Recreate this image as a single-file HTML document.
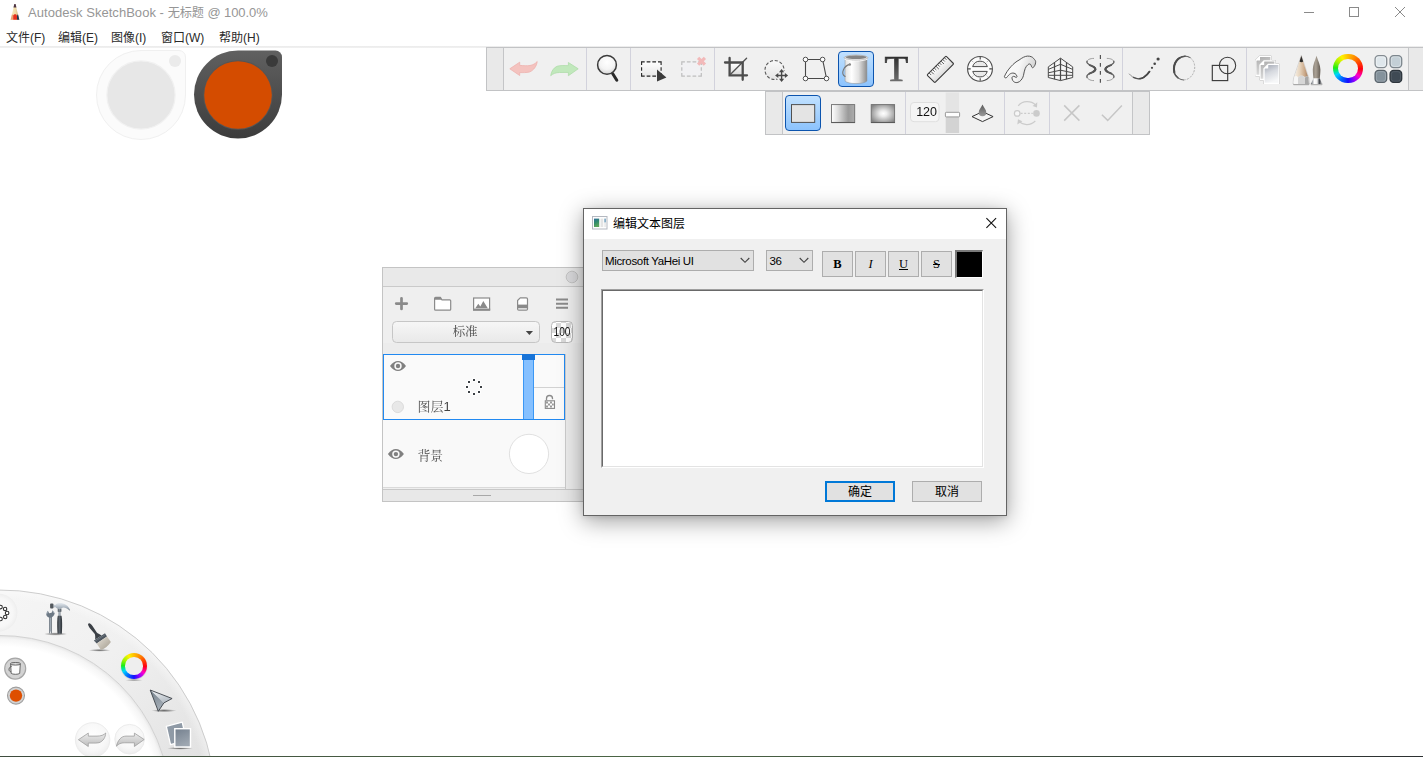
<!DOCTYPE html>
<html lang="zh-CN">
<head>
<meta charset="utf-8">
<title>Autodesk SketchBook</title>
<style>
*{box-sizing:border-box;margin:0;padding:0}
html,body{width:1423px;height:757px;overflow:hidden;background:#fff}
body{position:relative;font-family:"Liberation Sans","Noto Sans CJK SC",sans-serif;font-size:12px;color:#000}
.abs{position:absolute}
svg{position:absolute;overflow:visible}
/* title + menu */
#title{left:28px;top:4px;height:18px;line-height:18px;font-size:13px;color:#969696;white-space:nowrap;letter-spacing:-0.09px}
#menu{left:0;top:29.500px;height:17px;line-height:17px;font-size:12px;color:#2a2a2a;white-space:nowrap}
#menu span{position:absolute;top:0}
#menuline{left:0;top:46px;width:1423px;height:2px;background:linear-gradient(#ebebeb,#f1f1f1)}
#bottomline{left:0;top:756px;width:1423px;height:1px;background:linear-gradient(90deg,#3f4d3f,#4b6545 45%,#3b4a3c 75%,#2c3032);z-index:50}
/* toolbars */
.tb{background:#f0f0f0;border:1px solid #c2c3c5}
.tbh{background:#e9e9e9}
.vdiv{width:1px;background:#d2d2dc}
.sel{border:1.400px solid #0c54ae;border-radius:4px;background:linear-gradient(#c1e1ff,#8cc3fd)}
/* layer panel */
.serif{font-family:"Liberation Serif","Noto Serif CJK SC",serif;opacity:0.999}
/* dialog */
#dlg{left:583px;top:208px;width:424px;height:308px;background:#f0f0f0;border:1px solid #646464;box-shadow:0 5px 22px rgba(0,0,0,.38),0 1px 5px rgba(0,0,0,.10)}
.wbtn{background:#e1e1e1;border:1px solid #adadad}
.sb{font-family:"Liberation Serif",serif;font-size:12.500px;text-align:center;line-height:25px;color:#000}
</style>
</head>
<body>

<!-- ===== window title bar ===== -->
<div class="abs" id="title"><span style="letter-spacing:0.040px">Autodesk SketchBook - </span><span style="font-size:12.200px">无标题</span> @ 100.0%</div>
<div class="abs" id="menu">
<span style="left:6px">文件(F)</span><span style="left:58px">编辑(E)</span><span style="left:111px">图像(I)</span><span style="left:161px">窗口(W)</span><span style="left:219px">帮助(H)</span>
</div>

<!-- app icon (pencil) -->
<svg style="left:4px;top:0px" width="24" height="24" viewBox="4 0 24 24">
<defs><linearGradient id="gPen" x1="0" y1="0" x2="1" y2="0"><stop offset="0" stop-color="#fbedc4"/><stop offset="0.600" stop-color="#efd9a2"/><stop offset="1" stop-color="#c9a878"/></linearGradient></defs>
<path d="M14.400 4.600 H15.500 L19.300 19.700 H10.600 Z" fill="url(#gPen)"/>
<path d="M14.300 4.100 H15.600 L16.450 7.600 H13.450 Z" fill="#4c3444"/>
<path d="M11.900 14.700 C12.400 14.400 13 14.800 13.300 15.600 V19.700 H10.600 Z" fill="#eba274"/>
<path d="M13.200 15.600 C14 13.700 16.200 13.700 17 15.400 V19.700 H13.200 Z" fill="#e8311d"/>
<path d="M17 15.400 C17.300 14.600 17.800 14.300 18.100 14.500 L19.300 19.700 H17 Z" fill="#213a52"/>
</svg>
<!-- window controls -->
<svg style="left:1300px;top:4px" width="110" height="18" viewBox="0 0 110 18">
<path d="M4 8.5 H14" stroke="#8a8a8a" stroke-width="1" fill="none"/>
<rect x="49.5" y="3.5" width="9" height="9" stroke="#8a8a8a" stroke-width="1" fill="none"/>
<path d="M95 3 L105 13 M105 3 L95 13" stroke="#8a8a8a" stroke-width="1" fill="none"/>
</svg>
<div class="abs" id="menuline"></div>
<div class="abs" id="bottomline"></div>

<!-- ===== lagoon ===== -->
<svg id="lag" style="left:0;top:570px" width="240" height="187" viewBox="0 570 240 187">
<defs>
<linearGradient id="lgRing" gradientUnits="userSpaceOnUse" x1="20" y1="590" x2="200" y2="760"><stop offset="0" stop-color="#f5f5f5"/><stop offset="0.450" stop-color="#f0f0f0"/><stop offset="1" stop-color="#e2e2e2"/></linearGradient>
<radialGradient id="lgIn" gradientUnits="userSpaceOnUse" cx="0" cy="806" r="170.500"><stop offset="0.935" stop-color="#ffffff"/><stop offset="0.980" stop-color="#f5f5f5"/><stop offset="1" stop-color="#e6e6e6"/></radialGradient>
<radialGradient id="lgOut" gradientUnits="userSpaceOnUse" cx="0" cy="806" r="216"><stop offset="0.955" stop-color="#ffffff" stop-opacity="0"/><stop offset="1" stop-color="#ffffff" stop-opacity="0.400"/></radialGradient>
<radialGradient id="lgBlob"><stop offset="0" stop-color="#fbfbfb"/><stop offset="0.750" stop-color="#f7f7f7"/><stop offset="0.930" stop-color="#f1f1f1"/><stop offset="1" stop-color="#ededed"/></radialGradient>
<radialGradient id="lgSh"><stop offset="0" stop-color="#000" stop-opacity="0.550"/><stop offset="0.500" stop-color="#000" stop-opacity="0.300"/><stop offset="1" stop-color="#000" stop-opacity="0"/></radialGradient>
<linearGradient id="lgSteel" x1="0" y1="0" x2="1" y2="0"><stop offset="0" stop-color="#59636d"/><stop offset="0.450" stop-color="#a9b3bd"/><stop offset="1" stop-color="#4e5861"/></linearGradient>
<linearGradient id="lgHead" x1="0" y1="0" x2="0" y2="1"><stop offset="0" stop-color="#e6ebf0"/><stop offset="0.550" stop-color="#aeb8c2"/><stop offset="1" stop-color="#6f7a85"/></linearGradient>
<linearGradient id="lgGrip" x1="0" y1="0" x2="1" y2="0"><stop offset="0" stop-color="#2f3439"/><stop offset="0.450" stop-color="#5a626a"/><stop offset="1" stop-color="#2b3035"/></linearGradient>
<linearGradient id="lgBr" x1="0" y1="0" x2="1" y2="1"><stop offset="0" stop-color="#e6e2d9"/><stop offset="1" stop-color="#a39b8d"/></linearGradient>
<linearGradient id="lgArA" x1="0" y1="0" x2="0.600" y2="1"><stop offset="0" stop-color="#f6f8fa"/><stop offset="1" stop-color="#b4bcc4"/></linearGradient>
<linearGradient id="lgArB" x1="0" y1="0" x2="0.300" y2="1"><stop offset="0" stop-color="#74808b"/><stop offset="1" stop-color="#a4adb6"/></linearGradient>
<linearGradient id="lgPg" x1="0" y1="0" x2="0.400" y2="1"><stop offset="0" stop-color="#74808e"/><stop offset="1" stop-color="#9ea7b1"/></linearGradient>
<linearGradient id="lgUR" x1="0" y1="0" x2="0" y2="1"><stop offset="0" stop-color="#ececec"/><stop offset="1" stop-color="#bcbcbc"/></linearGradient>
<radialGradient id="lgBtn" cx="0.500" cy="0.400" r="0.600"><stop offset="0" stop-color="#ffffff"/><stop offset="0.700" stop-color="#f7f7f7"/><stop offset="1" stop-color="#ededed"/></radialGradient>
</defs>
<!-- inner disc shadow -->
<circle cx="0" cy="806" r="170.500" fill="url(#lgIn)"/>
<!-- ring -->
<path d="M0 590 A216 216 0 0 1 216 806 L170.500 806 A170.500 170.500 0 0 0 0 635.500 Z" fill="url(#lgRing)"/>
<path d="M0 590 A216 216 0 0 1 216 806 L170.500 806 A170.500 170.500 0 0 0 0 635.500 Z" fill="url(#lgOut)"/>
<path d="M-2 590.010 A216 216 0 0 1 216 806" fill="none" stroke="#cdcdcd" stroke-width="1"/>
<path d="M-2 635.510 A170.500 170.500 0 0 1 170.500 806" fill="none" stroke="#d2d2d2" stroke-width="1"/>
<!-- left blob -->
<circle cx="-1.500" cy="612.600" r="18.900" fill="url(#lgBlob)"/>
<g fill="#fff" stroke="#303030" stroke-width="1.100"><circle cx="0.500" cy="607.100" r="1.800"/><circle cx="5.100" cy="609" r="1.700"/><circle cx="7.100" cy="613" r="1.800"/><circle cx="5.200" cy="617" r="1.700"/><circle cx="0.500" cy="619" r="1.800"/></g>
<!-- tools -->
<ellipse cx="55.600" cy="634" rx="11.800" ry="1.700" fill="url(#lgSh)"/>
<path d="M49.100 616.800 H51.800 V633.300 H49.100 Z" fill="url(#lgSteel)"/>
<path d="M50.100 631.600 h0.700 v1.700 h-0.700 Z" fill="#f4f4f4"/>
<path d="M47.500 610.800 L46.200 614.300 C46.500 616.500 48 617.700 50.500 617.700 C52.500 617.500 54.200 615.500 54.700 613.200 L52.600 610.300 L51.600 612.700 L49.100 613.300 L48.300 611.400 Z" fill="#6d7985"/>
<path d="M47.600 611.300 L46.700 614.200 M52.700 610.900 L54.100 613.100" stroke="#b4bec8" stroke-width="0.700" fill="none"/>
<path d="M57.800 608.600 H61.300 V611.400 H60.500 V615.900 H58.500 V611.400 H57.800 Z" fill="url(#lgSteel)"/>
<path d="M57.800 610 H61.300 M57.800 611.300 H61.300" stroke="#454c53" stroke-width="0.600"/>
<path d="M57.800 615.800 H61.500 C62.300 619 62.300 628 61.800 633.800 H57.600 C57 628 57 619 57.800 615.800 Z" fill="url(#lgGrip)"/>
<path d="M53.200 604.400 L55.200 605 C56.200 604 57 603.400 57.800 603.200 C59.500 602.800 61.500 602.900 63.100 603.400 C64.800 604 66.300 604.800 67.300 605.800 C68.500 607 69.400 608.400 70 609.800 L69.700 610.800 C68.800 609.800 67.900 609 66.800 608.400 C65.600 607.800 64.300 607.400 63.100 607.400 C62.300 607.500 61.600 607.900 61 608.600 L57.800 608.700 C56.800 608.300 56 607.600 55.200 606.900 L53.200 607.800 Z" fill="url(#lgHead)"/>
<rect x="50.100" y="603.600" width="3.300" height="4.900" rx="0.900" fill="#54595e"/>
<!-- brush -->
<ellipse cx="99.600" cy="650.300" rx="11" ry="1.400" fill="url(#lgSh)"/>
<path d="M88.600 623.400 C89.300 622.900 90 623.200 90.400 623.700 C91.200 624.400 91.900 625.100 92.500 625.900 L95.150 630.100 L96.800 632.600 C97.800 633.700 99.300 634.100 101.600 635.500 L95.200 639.600 C95.300 637.600 95.300 635.600 94.800 634.100 L92.900 631.800 L89.700 628 C89 627.100 88.600 626.200 88.250 625.300 C87.900 624.500 88.100 623.800 88.600 623.400 Z" fill="#3b4046"/>
<path d="M93.900 640.400 L105 633.300 L107 636.400 L96.700 643.600 Z" fill="#4d565f"/>
<path d="M94.900 641.300 L105.700 634.400" stroke="#7d8790" stroke-width="0.600"/>
<path d="M96.700 643.600 L107 636.400 L110.900 642 C108 646 105 648.500 101 649.900 Z" fill="url(#lgBr)"/>
<!-- colour wheel shadow -->
<ellipse cx="134" cy="680.200" rx="9" ry="1.200" fill="url(#lgSh)" opacity="0.600"/>
<!-- arrow -->
<ellipse cx="164" cy="710.600" rx="12.500" ry="1.600" fill="url(#lgSh)"/>
<path d="M150.200 690 L172.100 698.500 L163.900 702.900 Z" fill="url(#lgArA)"/>
<path d="M150.200 690 L163.900 702.900 L158.300 711.300 Z" fill="url(#lgArB)"/>
<path d="M150.200 690 L172.100 698.500 L163.900 702.900 L158.300 711.300 Z" fill="none" stroke="#3c4248" stroke-width="0.900" stroke-linejoin="round"/>
<!-- pages -->
<ellipse cx="180" cy="748.300" rx="13" ry="1.400" fill="url(#lgSh)"/>
<path d="M166.300 726.300 L182.200 722.200 L186.500 740.500 L170.500 744.600 Z" fill="#8f9aa6" stroke="#fff" stroke-width="1.300" stroke-linejoin="round"/>
<rect x="174.800" y="728.700" width="15.700" height="18.300" fill="url(#lgPg)" stroke="#fff" stroke-width="1.400"/>
<!-- mini bucket -->
<circle cx="15.200" cy="668.600" r="10.500" fill="#d3d3d3" stroke="#a6a6a6" stroke-width="1.200"/>
<path d="M10.600 663.800 L11.200 673.400 C12.500 674.600 18.400 674.600 19.700 673.400 L20.300 663.800 Z" fill="#fcfcfc" stroke="#5a5a5a" stroke-width="0.900"/>
<ellipse cx="15.450" cy="663.800" rx="5" ry="1.300" fill="#dcdcdc" stroke="#555" stroke-width="0.900"/>
<path d="M11.800 666.200 C8.600 667 8 671 10.800 671.800" fill="none" stroke="#555" stroke-width="0.900"/>
<!-- colour dot -->
<circle cx="16" cy="695.600" r="8.500" fill="#d2d2d2" stroke="#9e9e9e" stroke-width="1.100"/>
<circle cx="16" cy="695.600" r="6.200" fill="#de4f00"/>
<!-- undo / redo -->
<circle cx="92.600" cy="739.900" r="17.200" fill="url(#lgBtn)" stroke="#ececec" stroke-width="1"/>
<circle cx="129.600" cy="739.200" r="14.800" fill="url(#lgBtn)" stroke="#ececec" stroke-width="1"/>
<path d="M78.400 739.700 L88.300 733.100 L88.300 736.100 L97 736.100 C101 736.100 104 735 105.700 733 C105.500 737 103.500 741.200 99 742.700 C97 743.200 95 743.100 93 743.100 L88.300 743.100 L88.300 746.500 Z" fill="url(#lgUR)" stroke="#999" stroke-width="0.750" stroke-linejoin="round"/>
<path d="M144.200 739.500 L134.400 733.100 L134.400 736.100 L126 736.100 C121 736.100 117.800 740.500 116.400 746.200 C118.500 743.800 121 742.800 124.500 742.800 L134.400 742.800 L134.400 746.500 Z" fill="url(#lgUR)" stroke="#999" stroke-width="0.750" stroke-linejoin="round"/>
</svg>
<div class="abs" style="left:121px;top:653px;width:26px;height:26px;border-radius:50%;background:conic-gradient(from 0deg,#ffbe00 0deg,#ff8c00 30deg,#ff4800 60deg,#ff0010 92deg,#ff00c8 125deg,#9800ff 150deg,#1410ff 180deg,#0068ff 212deg,#00d4ff 242deg,#00e890 257deg,#20ee10 273deg,#a4f400 302deg,#fff200 332deg,#ffbe00 360deg);box-shadow:0 0.500px 1px rgba(0,0,0,0.250)"></div><div class="abs" style="left:125.300px;top:657.300px;width:17.400px;height:17.400px;border-radius:50%;background:#eeeeee"></div>

<!-- ===== colour pucks ===== -->
<svg style="left:0;top:0" width="300" height="150" viewBox="0 0 300 150">
<defs>
<linearGradient id="pkd" x1="0" y1="0" x2="0" y2="1"><stop offset="0" stop-color="#606060"/><stop offset="1" stop-color="#3c3c3c"/></linearGradient>
</defs>
<!-- light puck -->
<path d="M141 50.5 H179 a6.5 6.5 0 0 1 6.500 6.500 V95 A44.5 44.500 0 1 1 141 50.500 Z" fill="#fbfbfb" stroke="#f0f0f0" stroke-width="1"/>
<circle cx="141" cy="95" r="34.100" fill="#e7e7e7" stroke="#f1f1f1" stroke-width="1.200"/>
<circle cx="175" cy="61" r="6" fill="#ebebeb"/>
<!-- dark puck -->
<path d="M238 50.5 H275.500 a6.500 6.500 0 0 1 6.500 6.500 V94.500 A44 44 0 1 1 238 50.500 Z" fill="url(#pkd)"/>
<circle cx="238" cy="95" r="34.800" fill="#555" />
<circle cx="238" cy="95" r="33.800" fill="#d44c00"/>
<circle cx="272" cy="61" r="6" fill="#3a3a3a"/>
</svg>

<!-- ===== main toolbar ===== -->
<div class="abs tb" id="tb1" style="left:486px;top:47px;width:940px;height:44px"></div>
<div class="abs tbh" style="left:487px;top:48px;width:16px;height:42px"></div>
<div class="abs tbh" style="left:1409px;top:48px;width:16px;height:42px"></div>
<div class="abs vdiv" style="left:503px;top:48px;height:42px;background:#c4c5c7"></div>
<div class="abs vdiv" style="left:586px;top:48px;height:42px"></div>
<div class="abs vdiv" style="left:630px;top:48px;height:42px"></div>
<div class="abs vdiv" style="left:714px;top:48px;height:42px"></div>
<div class="abs vdiv" style="left:918px;top:48px;height:42px"></div>
<div class="abs vdiv" style="left:1122px;top:48px;height:42px"></div>
<div class="abs vdiv" style="left:1246px;top:48px;height:42px"></div>
<div class="abs vdiv" style="left:1408px;top:48px;height:42px;background:#c4c5c7"></div>
<div class="abs sel" style="left:838px;top:51px;width:36px;height:36px"></div>
<svg id="tb1i" style="left:0;top:0" width="1423" height="140" viewBox="0 0 1423 140">
<defs>
<linearGradient id="gW" x1="0" y1="0" x2="0" y2="1"><stop offset="0" stop-color="#ffffff"/><stop offset="1" stop-color="#dcdcdc"/></linearGradient>
<linearGradient id="gW3" x1="0" y1="0" x2="0" y2="1"><stop offset="0" stop-color="#ffffff"/><stop offset="1" stop-color="#e7e7e7"/></linearGradient>
<linearGradient id="gT" x1="0" y1="0" x2="0" y2="1"><stop offset="0" stop-color="#2b2b2b"/><stop offset="1" stop-color="#707070"/></linearGradient>
<radialGradient id="gMag" cx="0.5" cy="0.35" r="0.65"><stop offset="0" stop-color="#ffffff"/><stop offset="0.6" stop-color="#f4f4f4"/><stop offset="1" stop-color="#d4d4d4"/></radialGradient>
<linearGradient id="gBk" x1="0" y1="0" x2="1" y2="0"><stop offset="0" stop-color="#e2e2e2"/><stop offset="0.300" stop-color="#ffffff"/><stop offset="0.620" stop-color="#e2e2e2"/><stop offset="0.900" stop-color="#a4a4a4"/><stop offset="1" stop-color="#8a8a8a"/></linearGradient>
<linearGradient id="gPg" x1="0" y1="0" x2="0.350" y2="1"><stop offset="0" stop-color="#9fa4b0"/><stop offset="0.500" stop-color="#d6d9df"/><stop offset="1" stop-color="#f6f7f8"/></linearGradient>
<linearGradient id="gPgB" x1="0" y1="0" x2="0.350" y2="1"><stop offset="0" stop-color="#a8a8a8"/><stop offset="1" stop-color="#e0e0e0"/></linearGradient>
<linearGradient id="gWood" x1="0" y1="0" x2="1" y2="0"><stop offset="0" stop-color="#f7f1e8"/><stop offset="0.400" stop-color="#e6d3bc"/><stop offset="0.750" stop-color="#c9a686"/><stop offset="1" stop-color="#9a7557"/></linearGradient>
<linearGradient id="gBris" x1="0" y1="0" x2="1" y2="0"><stop offset="0" stop-color="#8d857b"/><stop offset="0.4" stop-color="#aaa195"/><stop offset="1" stop-color="#645c53"/></linearGradient>
<linearGradient id="gFer" x1="0" y1="0" x2="1" y2="0"><stop offset="0" stop-color="#5a6068"/><stop offset="0.3" stop-color="#ffffff"/><stop offset="0.55" stop-color="#f0f0f0"/><stop offset="0.75" stop-color="#3c4046"/><stop offset="1" stop-color="#c8c8c8"/></linearGradient>
<linearGradient id="gFc" x1="0" y1="0" x2="1" y2="0.300"><stop offset="0" stop-color="#ffffff"/><stop offset="0.550" stop-color="#f6f6f6"/><stop offset="1" stop-color="#d4d4d4"/></linearGradient>
<clipPath id="cpPro"><circle cx="980" cy="68.8" r="7.300"/></clipPath>
</defs>

<!-- undo / redo -->
<path d="M509.800 68.800 L519.700 62.200 L519.700 65.400 C524 65.600 527 66 530 65.500 C533 65 535.500 63.500 537.200 61.500 C536.800 66 533.500 70.500 529.500 72 C526 72.800 523 72.600 519.700 72.600 L519.700 75.500 Z" fill="#f4c3bf" stroke="#eeb1ad" stroke-width="0.800" stroke-linejoin="round"/>
<path d="M578.200 68.800 L568.400 62.500 L568.400 65.700 C564 65.500 560 65.300 557 66.300 C553.500 67.800 551.300 71.500 550.700 75.700 C553 73.500 556 72.600 559.500 72.500 C562.500 72.400 565.500 72.400 568.400 72.400 L568.400 75.700 Z" fill="#c1e8bc" stroke="#aedcaa" stroke-width="0.800" stroke-linejoin="round"/>

<!-- magnifier -->
<path d="M612.600 73.500 L616.800 80.200" stroke="#2a2a2a" stroke-width="3" stroke-linecap="round"/>
<circle cx="607" cy="64.900" r="9.400" fill="url(#gMag)" stroke="#3a3a3a" stroke-width="1.500"/>

<!-- select -->
<rect x="641.600" y="61.900" width="19.500" height="14.200" fill="url(#gW3)"/><path d="M641.00 61.90 h3.7 M641.00 76.10 h3.7 M646.67 61.90 h3.7 M646.67 76.10 h3.7 M652.33 61.90 h3.7 M652.33 76.10 h3.7 M658.00 61.90 h3.7 M658.00 76.10 h3.7 M641.60 61.30 v3.7 M661.10 61.30 v3.7 M641.60 67.15 v3.7 M661.10 67.15 v3.7 M641.60 73.00 v3.7 M661.10 73.00 v3.7" stroke="#262626" stroke-width="1.1" fill="none"/>
<path d="M657 69.400 L666.400 77.500 L657 81.600 Z" fill="#3b3b3b"/>
<!-- deselect -->
<rect x="681.800" y="61.900" width="19.500" height="14.200" fill="#f1f1f3"/><path d="M681.20 61.90 h3.7 M681.20 76.10 h3.7 M686.87 61.90 h3.7 M686.87 76.10 h3.7 M692.53 61.90 h3.7 M692.53 76.10 h3.7 M698.20 61.90 h3.7 M698.20 76.10 h3.7 M681.80 61.30 v3.7 M701.30 61.30 v3.7 M681.80 67.15 v3.7 M701.30 67.15 v3.7 M681.80 73.00 v3.7 M701.30 73.00 v3.7" stroke="#bebebe" stroke-width="1.2" fill="none"/>
<path d="M698.100 57.900 L704.900 64.700 M704.900 57.900 L698.100 64.700" stroke="#f2b9b9" stroke-width="3.200" stroke-linecap="butt"/>

<!-- crop -->
<path d="M730.800 63.700 H741.500 V74.100 H730.800 Z" fill="url(#gW)"/>
<path d="M746.600 58.300 L729.600 75.300" stroke="#505050" stroke-width="1.300" stroke-linecap="round"/>
<path d="M729.600 58 V75.300 H747 M725 62.500 H742.700 V79.800" stroke="#4c4c4c" stroke-width="2.300" fill="none" stroke-linecap="round" stroke-linejoin="miter"/>

<!-- lasso move -->
<circle cx="774.500" cy="70" r="9.500" fill="url(#gW)" fill-opacity="0.600" stroke="#5a5a5a" stroke-width="1.100" stroke-dasharray="3.100 1.870"/>
<circle cx="781.600" cy="75.500" r="5.500" fill="#efefef"/>
<path d="M781.600 69 L784.200 72.200 H782.300 V74.800 H784.900 V72.900 L788.100 75.500 L784.900 78.100 V76.200 H782.300 V78.800 H784.200 L781.600 82 L779 78.800 H780.900 V76.200 H778.300 V78.100 L775.100 75.500 L778.300 72.900 V74.800 H780.900 V72.200 H779 Z" fill="#484848"/>

<!-- distort -->
<path d="M805.500 59.500 L822.600 59.500 L826.500 78.500 L805.500 78.500 Z" fill="none" stroke="#484848" stroke-width="1.100"/>
<g fill="#fff" stroke="#484848" stroke-width="0.950"><circle cx="805.500" cy="59.500" r="2.300"/><circle cx="822.600" cy="59.500" r="2.300"/><circle cx="826.500" cy="78.500" r="2.300"/><circle cx="805.500" cy="78.500" r="2.300"/></g>

<!-- bucket -->
<path d="M845.100 58 L845.100 81.100 C848 84.400 864 84.400 866.900 81.100 L866.900 58 Z" fill="url(#gBk)" stroke="#909090" stroke-width="0.500"/>
<ellipse cx="856" cy="57.800" rx="12" ry="2.750" fill="#dcdcdc" stroke="#a2a2a2" stroke-width="0.600"/>
<ellipse cx="856.100" cy="57.300" rx="10.300" ry="1.750" fill="#858585"/>
<path d="M844.300 59 C848 61.600 864 61.600 867.700 59" fill="none" stroke="#ffffff" stroke-width="0.900" stroke-opacity="0.900"/>
<path d="M849.800 64.400 C843.800 66 840.200 73.500 845.100 76.500" fill="none" stroke="#777" stroke-width="1.100" stroke-linecap="round"/>
<circle cx="849.800" cy="64.400" r="1.250" fill="#8a8a8a"/>
<!-- text tool -->


<!-- ruler -->
<g transform="translate(940.400 69.400) rotate(-45)">
<rect x="-13.400" y="-5.500" width="26.800" height="11" rx="0.800" fill="url(#gW)" stroke="#3a3a3a" stroke-width="1.100"/>
<path d="M-10.500 -5.500 v3 M-8.100 -5.500 v4.200 M-5.700 -5.500 v3 M-3.300 -5.500 v3 M-0.900 -5.500 v4.200 M1.500 -5.500 v3 M3.900 -5.500 v3 M6.300 -5.500 v4.200 M8.700 -5.500 v3 M11.100 -5.500 v3" stroke="#555" stroke-width="0.900"/>
</g>

<!-- ellipse guide -->
<circle cx="980" cy="68.900" r="12.400" fill="#fbfbfb" stroke="#4c4c4c" stroke-width="1.100"/>
<path d="M972.640 66.600 A7.700 7.700 0 0 1 987.360 66.600 Z M972.760 71.400 A7.500 7.500 0 0 0 987.240 71.400 Z" fill="#e9e9e9" stroke="#4c4c4c" stroke-width="1" stroke-linejoin="round"/>
<path d="M980.200 57 v2.600 M980.200 80.800 v-2.600 M968.100 68.900 h2.600 M991.900 68.900 h-2.600" stroke="#444" stroke-width="1.100"/>
<path d="M972.300 61.200 l1 1 M987.700 61.200 l-1 1 M972.300 76.600 l1 -1 M987.700 76.600 l-1 -1" stroke="#999" stroke-width="0.800"/>

<!-- french curve -->
<path d="M1004.400 76.600 C1007 70 1014 62.500 1019 60.100 C1022 57.800 1025 56.200 1027.500 56.100 C1030.500 56 1032.500 57 1033.600 58.400 C1035 60 1036 61 1035.600 62.800 C1035.300 64.500 1034.800 65.700 1034.200 66.300 C1033.600 67.400 1033 67.900 1032.500 67.700 C1031.800 67.400 1031.600 66.900 1031.400 66.300 C1031.200 65.500 1031 64.800 1030.500 64.300 C1029.800 63.800 1028.800 63.900 1028 64.600 C1026.800 65.600 1025.800 67 1025.200 68.500 C1024.300 70.800 1024 73 1023.500 75.300 C1023 77.800 1021.500 80 1019.600 81.500 C1018.500 82.300 1017.300 82.700 1016.200 82.600 C1014.800 82.500 1013.500 81.800 1012.800 80.600 C1012.200 79.600 1011.800 78.400 1012 77.500 C1012.300 76.600 1013.200 76.200 1014 76.400 C1014.800 76.600 1015.500 77.300 1016.200 77.500 C1017 77.200 1017.200 76.500 1016.800 75.900 C1016.400 74.800 1015.900 74 1015.100 73.600 C1013.700 72.900 1012 72.900 1010.600 73.600 C1009 74.400 1007.800 76.200 1006.700 77.500 C1005.800 78.200 1004.300 77.800 1004.400 76.600 Z" fill="url(#gFc)" stroke="#4c4c4c" stroke-width="0.950" stroke-linejoin="round"/>

<!-- perspective grid -->
<g fill="none" stroke="#4a4a4a" stroke-width="1">
<path d="M1048.300 66.900 L1060.500 58.200 L1072.700 66.900 V77.500 L1060.500 80.600 L1048.300 77.500 Z" fill="#f7f7f7"/>
<path d="M1048.300 69.400 L1060.500 64.300 L1072.700 69.400 M1048.300 72.800 L1060.500 70.200 L1072.700 72.800 M1048.300 75.300 H1072.700"/>
<path d="M1060.500 58.200 V80.600 M1054.500 62.600 V79.200 M1066.500 62.600 V79.200" stroke-width="1.250"/>
</g>

<!-- symmetry -->
<path d="M1100.400 55.100 V82.900" stroke="#555" stroke-width="1.200" stroke-dasharray="3.800 4.130"/>
<g fill="none">
<path d="M1094 58.400 C1090 58.400 1086.900 59.800 1086.900 62.100 C1086.900 65.500 1095.400 65.800 1095.400 69.300 C1095.400 72.800 1086.900 73 1086.900 76.400 C1086.900 78.800 1090 80.600 1094 80.600" stroke="#8a8a8a" stroke-width="0.800" pathLength="100"/>
<path d="M1094 58.400 C1090 58.400 1086.900 59.800 1086.900 62.100 C1086.900 65.500 1095.400 65.800 1095.400 69.300 C1095.400 72.800 1086.900 73 1086.900 76.400 C1086.900 78.800 1090 80.600 1094 80.600" stroke="#666" stroke-width="1.300" pathLength="100" stroke-dasharray="0 18 64 100"/>
<path d="M1094 58.400 C1090 58.400 1086.900 59.800 1086.900 62.100 C1086.900 65.500 1095.400 65.800 1095.400 69.300 C1095.400 72.800 1086.900 73 1086.900 76.400 C1086.900 78.800 1090 80.600 1094 80.600" stroke="#5a5a5a" stroke-width="1.800" pathLength="100" stroke-dasharray="0 30 40 100"/>
<path d="M1094 58.400 C1090 58.400 1086.900 59.800 1086.900 62.100 C1086.900 65.500 1095.400 65.800 1095.400 69.300 C1095.400 72.800 1086.900 73 1086.900 76.400 C1086.900 78.800 1090 80.600 1094 80.600" stroke="#555" stroke-width="2.200" pathLength="100" stroke-dasharray="0 41 18 100"/>
<path d="M1106.800 58.400 C1110.800 58.400 1113.900 59.800 1113.900 62.100 C1113.900 65.500 1105.400 65.800 1105.400 69.300 C1105.400 72.800 1113.900 73 1113.900 76.400 C1113.900 78.800 1110.800 80.600 1106.800 80.600" stroke="#8a8a8a" stroke-width="0.800" pathLength="100"/>
<path d="M1106.800 58.400 C1110.800 58.400 1113.900 59.800 1113.900 62.100 C1113.900 65.500 1105.400 65.800 1105.400 69.300 C1105.400 72.800 1113.900 73 1113.900 76.400 C1113.900 78.800 1110.800 80.600 1106.800 80.600" stroke="#666" stroke-width="1.300" pathLength="100" stroke-dasharray="0 18 64 100"/>
<path d="M1106.800 58.400 C1110.800 58.400 1113.900 59.800 1113.900 62.100 C1113.900 65.500 1105.400 65.800 1105.400 69.300 C1105.400 72.800 1113.900 73 1113.900 76.400 C1113.900 78.800 1110.800 80.600 1106.800 80.600" stroke="#5a5a5a" stroke-width="1.800" pathLength="100" stroke-dasharray="0 30 40 100"/>
<path d="M1106.800 58.400 C1110.800 58.400 1113.900 59.800 1113.900 62.100 C1113.900 65.500 1105.400 65.800 1105.400 69.300 C1105.400 72.800 1113.900 73 1113.900 76.400 C1113.900 78.800 1110.800 80.600 1106.800 80.600" stroke="#555" stroke-width="2.200" pathLength="100" stroke-dasharray="0 41 18 100"/>
</g>

<!-- steady stroke -->
<g fill="none" stroke-linecap="round">
<path d="M1129.300 74 C1133 78.500 1139 80 1143.500 77.500 C1146 76 1148 74 1149.500 71.600" stroke="#777" stroke-width="0.800" pathLength="100"/>
<path d="M1129.300 74 C1133 78.500 1139 80 1143.500 77.500 C1146 76 1148 74 1149.500 71.600" stroke="#555" stroke-width="1.300" pathLength="100" stroke-dasharray="78 100" stroke-dashoffset="-22"/>
<path d="M1129.300 74 C1133 78.500 1139 80 1143.500 77.500 C1146 76 1148 74 1149.500 71.600" stroke="#484848" stroke-width="1.800" pathLength="100" stroke-dasharray="50 100" stroke-dashoffset="-50"/>
</g>
<circle cx="1152" cy="67.800" r="1.100" fill="#444"/><circle cx="1154.700" cy="63.700" r="1.300" fill="#444"/><circle cx="1158.100" cy="59" r="1.600" fill="#444"/>

<!-- predictive ellipse -->
<g transform="rotate(14 1184.300 68)" fill="none">
<ellipse cx="1184.300" cy="68" rx="10.300" ry="12" stroke="#a8a8a8" stroke-width="0.900" stroke-dasharray="2 1.300"/>
<path d="M1187.500 56.500 C1178.500 54.500 1174 62 1174 68 C1174 74.500 1178.500 81 1186.500 79.800" stroke="#666" stroke-width="1" stroke-linecap="round" pathLength="100"/>
<path d="M1187.500 56.500 C1178.500 54.500 1174 62 1174 68 C1174 74.500 1178.500 81 1186.500 79.800" stroke="#555" stroke-width="1.500" pathLength="100" stroke-dasharray="0 12 74 100"/>
<path d="M1187.500 56.500 C1178.500 54.500 1174 62 1174 68 C1174 74.500 1178.500 81 1186.500 79.800" stroke="#4c4c4c" stroke-width="2" pathLength="100" stroke-dasharray="0 26 44 100"/>
</g>

<!-- shapes -->
<rect x="1212.300" y="65.400" width="15.400" height="15.200" fill="none" stroke="#3a3a3a" stroke-width="1.150"/>
<circle cx="1227.500" cy="65.500" r="8.200" fill="none" stroke="#3a3a3a" stroke-width="1.050"/>

<!-- layers -->
<g stroke="#fff" stroke-width="1.300" stroke-linejoin="round" style="filter:drop-shadow(0.300px 0.900px 0.700px rgba(0,0,0,0.450)) drop-shadow(0 0 0.400px rgba(0,0,0,0.150))">
<path d="M1260 56.300 H1271 V75.500 H1255.800 V60.500 Z" fill="url(#gPgB)"/>
<path d="M1264.200 60.800 H1275 V79.500 H1260 V65 Z" fill="url(#gPgB)"/>
<path d="M1268.200 64.400 H1279 V83.400 H1264 V68.600 Z" fill="url(#gPg)"/>
</g>
<path d="M1255.800 60.500 L1260 56.300 V60.500 Z M1260 65 L1264.200 60.800 V65 Z M1264 68.600 L1268.200 64.400 V68.600 Z" fill="#fff"/>

<!-- brushes -->
<g>
<path d="M1293.200 83.600 H1309.200 V84.700 H1293.200 Z M1310.700 83.600 H1322.400 V84.700 H1310.700 Z" fill="#000" fill-opacity="0.300"/>
<path d="M1293.600 84.700 H1308.800 V85.500 H1293.600 Z M1311.100 84.700 H1322 V85.500 H1311.100 Z" fill="#000" fill-opacity="0.120"/>
<path d="M1301.300 55.300 L1293.500 78.400 L1293 84 H1309.500 L1309 78.400 Z" fill="none" stroke="#000" stroke-opacity="0.180" stroke-width="0.600"/>
<path d="M1301.300 55.800 L1294 78.600 L1308.600 78.600 Z" fill="url(#gWood)"/>
<path d="M1301.300 55.800 L1299.500 61.500 C1300.700 62.400 1302 62.400 1303.200 61.500 Z" fill="#2c2c2c"/>
<path d="M1294.300 77.400 C1295.200 75.600 1297 75.600 1298 77.400 C1299.500 75.200 1303.500 75.200 1305 77.400 C1306 75.800 1307.600 75.800 1308.400 77.400 L1309 83.900 H1293.400 Z" fill="#f6f6f6"/>
<path d="M1298 77.400 C1299.500 75.200 1303.500 75.200 1305 77.400 V83.900 H1298 Z" fill="#d6d6d6"/>
<path d="M1305 77.400 C1306 75.800 1307.600 75.800 1308.400 77.400 L1309 83.900 H1305 Z" fill="#a8a8a8"/>
<path d="M1316.500 55.800 C1315 61 1312.800 65 1312.800 69.500 C1312.800 73 1313.200 76 1313.400 78.600 H1319.800 C1320 76 1320.400 73 1320.400 69.500 C1320.400 65 1318 61 1316.500 55.800 Z" fill="url(#gBris)"/>
<path d="M1313.200 78.400 H1320 C1320.500 80.500 1321.600 82 1322.200 83.900 H1310.900 C1311.600 82 1312.700 80.500 1313.200 78.400 Z" fill="url(#gFer)"/>

</g>
<!-- swatch grid -->
<g stroke-width="1.300">
<rect x="1375.100" y="55.600" width="11.600" height="12" rx="3.500" fill="#dfe7ec" stroke="#848b91"/>
<rect x="1390.100" y="55.600" width="11.600" height="12" rx="3.500" fill="#c3cfd6" stroke="#7d868d"/>
<rect x="1375.100" y="70.400" width="11.600" height="12" rx="3.500" fill="#84929c" stroke="#58626a"/>
<rect x="1390.100" y="70.400" width="11.600" height="12" rx="3.500" fill="#3f4a54" stroke="#2d353c"/>
</g>
<g fill="none" stroke="#fff" stroke-width="0.800">
<rect x="1376.300" y="56.800" width="9.200" height="9.600" rx="2.500" stroke-opacity="0.550"/>
<rect x="1391.300" y="56.800" width="9.200" height="9.600" rx="2.500" stroke-opacity="0.400"/>
<rect x="1376.300" y="71.600" width="9.200" height="9.600" rx="2.500" stroke-opacity="0.220"/>
<rect x="1391.300" y="71.600" width="9.200" height="9.600" rx="2.500" stroke-opacity="0.120"/>
</g>
</svg>
<div class="abs" style="left:1333.100px;top:53.600px;width:29.800px;height:29.800px;border-radius:50%;background:conic-gradient(from 0deg,#ffbe00 0deg,#ff8c00 30deg,#ff4800 60deg,#ff0010 92deg,#ff00c8 125deg,#9800ff 150deg,#1410ff 180deg,#0068ff 212deg,#00d4ff 242deg,#00e890 257deg,#20ee10 273deg,#a4f400 302deg,#fff200 332deg,#ffbe00 360deg)"></div><div class="abs" style="left:1338.100px;top:58.600px;width:19.800px;height:19.800px;border-radius:50%;background:#f0f0f0"></div>


<svg style="left:880px;top:50px;opacity:0.999" width="34" height="38" viewBox="880 50 34 38">
<defs><linearGradient id="gT2" gradientUnits="userSpaceOnUse" x1="0" y1="-25" x2="0" y2="0"><stop offset="0" stop-color="#2b2b2b"/><stop offset="1" stop-color="#6c6c6c"/></linearGradient></defs>
<text transform="translate(896.400 80.900) scale(1.110 1.030)" x="0" y="0" text-anchor="middle" font-family="'Liberation Serif',serif" font-size="35" fill="url(#gT2)" stroke="url(#gT2)" stroke-width="0.650">T</text>
</svg>
<!-- ===== sub toolbar ===== -->
<div class="abs tb" id="tb2" style="left:765px;top:91px;width:385px;height:44px"></div>
<div class="abs tbh" style="left:766px;top:92px;width:16px;height:42px"></div>
<div class="abs tbh" style="left:1133px;top:92px;width:16px;height:42px"></div>
<div class="abs vdiv" style="left:782px;top:92px;height:42px;background:#c4c5c7"></div>
<div class="abs vdiv" style="left:905px;top:92px;height:42px"></div>
<div class="abs vdiv" style="left:1004px;top:92px;height:42px"></div>
<div class="abs vdiv" style="left:1049px;top:92px;height:42px"></div>
<div class="abs vdiv" style="left:1132px;top:92px;height:42px;background:#c4c5c7"></div>
<div class="abs sel" style="left:785px;top:95px;width:36px;height:36px"></div>
<svg id="tb2i" style="left:0;top:0;opacity:0.999" width="1423" height="140" viewBox="0 0 1423 140">
<defs>
<linearGradient id="gF2" x1="0" y1="0" x2="1" y2="0"><stop offset="0" stop-color="#ffffff"/><stop offset="0.250" stop-color="#e2e2e2"/><stop offset="0.720" stop-color="#9a9a9a"/><stop offset="1" stop-color="#adadad"/></linearGradient>
<radialGradient id="gF3" cx="0.52" cy="0.5" r="0.62"><stop offset="0" stop-color="#ffffff"/><stop offset="0.25" stop-color="#ececec"/><stop offset="1" stop-color="#858585"/></radialGradient>
<linearGradient id="gDrop" x1="0" y1="0" x2="0" y2="1"><stop offset="0" stop-color="#5c5c5c"/><stop offset="1" stop-color="#9a9a9a"/></linearGradient>
</defs>
<!-- fill types -->
<rect x="791.500" y="104.600" width="23.200" height="17.800" fill="#e4e4e4" stroke="#505050" stroke-width="1"/>
<rect x="831.500" y="104.600" width="23.200" height="17.800" fill="url(#gF2)" stroke="#6e6e6e" stroke-width="0.900"/>
<path d="M831.200 122.600 H855" stroke="#4e4e4e" stroke-width="0.800"/>
<rect x="871.200" y="104.600" width="23.400" height="17.800" fill="url(#gF3)" stroke="#6e6e6e" stroke-width="0.900"/>
<path d="M871 122.600 H895" stroke="#4e4e4e" stroke-width="0.800"/>
<!-- tolerance field -->
<rect x="910.500" y="102.500" width="28.500" height="19.200" rx="3.500" fill="#f5f5f5" stroke="#dedede" stroke-width="1"/>
<text x="926.600" y="116.200" text-anchor="middle" font-family="'Liberation Sans',sans-serif" font-size="12.500" fill="#111">120</text>
<!-- slider -->
<rect x="945.700" y="92.500" width="13.400" height="22" fill="#e4e4e4"/>
<rect x="945.700" y="114.500" width="13.400" height="18.500" fill="#d3d3d3"/>
<rect x="945.400" y="112.300" width="14.200" height="4.600" rx="0.800" fill="#fdfdfd" stroke="#8e8e8e" stroke-width="0.900"/>
<!-- drop -->
<path d="M972 116.600 L982.500 111.700 L993.100 116.600 L982.500 121.600 Z" fill="#f4f4f4" stroke="#333" stroke-width="1" stroke-linejoin="round"/>
<path d="M982.500 104.600 C984 108 986.300 110 986.300 112.400 A3.800 3.800 0 0 1 978.700 112.400 C978.700 110 981 108 982.500 104.600 Z" fill="url(#gDrop)"/>
<!-- cycle (disabled) -->
<g fill="none" stroke="#cbcbcb" stroke-width="1.200">
<circle cx="1017.200" cy="113.400" r="2.800" fill="#f6f6f6"/>
<path d="M1020.600 113.400 H1032.800" stroke-dasharray="2 1.600"/>
<path d="M1018.200 105.800 C1022.500 100.500 1031 100.400 1035.600 105"/>
<path d="M1035.300 121 C1030.500 125.800 1023 125.500 1019.400 121.700"/>
</g>
<circle cx="1036.500" cy="113.400" r="3.300" fill="#cbcbcb"/>
<path d="M1037.300 102.300 L1037 107.500 L1032.600 106.100 Z" fill="#cbcbcb"/>
<path d="M1017.300 124.400 L1018 119.300 L1022.400 121.200 Z" fill="#cbcbcb"/>
<!-- cancel / ok -->
<path d="M1064.200 105.400 L1079.400 120.600 M1079.400 105.400 L1064.200 120.600" stroke="#c6c6c6" stroke-width="1.500" fill="none"/>
<path d="M1101.900 114.700 L1107.700 120.400 L1121.900 105.400" stroke="#c6c6c6" stroke-width="1.500" fill="none"/>
</svg>


<!-- ===== layer panel ===== -->
<div class="abs" id="lp" style="left:382px;top:267px;width:204px;height:235px;background:#efefef;border:1px solid #c4c4c4"></div>
<div class="abs" style="left:383px;top:268px;width:202px;height:18px;background:#e9e9e9"></div>
<div class="abs" style="left:383px;top:286px;width:202px;height:1px;background:#cacaca"></div>
<!-- blend dropdown + opacity -->
<div class="abs" style="left:392px;top:321px;width:148px;height:22px;border:1px solid #c6c6c6;border-radius:4.500px;background:linear-gradient(#f6f6f6,#e9e9e9)"></div>
<div class="abs serif" style="left:435px;top:322px;width:60px;height:20px;line-height:20px;text-align:center;font-size:12.500px;color:#4a4a4a;letter-spacing:-0.300px">标准</div>
<div class="abs" style="left:551px;top:321px;width:22px;height:22px;border:1px solid #b8b8b8;border-radius:4.500px;overflow:hidden;background-color:#fff;background-image:linear-gradient(45deg,#dadada 25%,transparent 25%,transparent 75%,#dadada 75%),linear-gradient(45deg,#dadada 25%,transparent 25%,transparent 75%,#dadada 75%);background-size:10px 10px;background-position:-1px 1px,4px 6px"></div>
<!-- list -->
<div class="abs" style="left:383px;top:343px;width:202px;height:11px;background:#ececec"></div>
<div class="abs" style="left:383px;top:354px;width:182px;height:134px;background:#f9f9f9"></div>
<div class="abs" style="left:565px;top:354px;width:1px;height:135px;background:#cbcbcb"></div>
<div class="abs" style="left:566px;top:354px;width:19px;height:135px;background:#ececec"></div>
<div class="abs" style="left:383px;top:487px;width:182px;height:1px;background:#dadada"></div>
<div class="abs" style="left:383px;top:489px;width:202px;height:1px;background:#c8c8c8"></div>
<div class="abs" style="left:383px;top:490px;width:202px;height:11px;background:#e8e8e8"></div>
<div class="abs" style="left:473px;top:495px;width:18px;height:1px;background:#a8a8a8"></div>
<!-- layer 1 row -->
<div class="abs" style="left:383px;top:354px;width:182px;height:66px;background:#fafafa;border:1px solid #2189f1"></div>
<div class="abs" style="left:523px;top:355px;width:11px;height:64px;background:#85c0ff;border-left:1px solid #3b97f4;border-right:1px solid #3b97f4"></div>
<div class="abs" style="left:522px;top:354px;width:13px;height:6px;background:#1874d8"></div>
<div class="abs" style="left:534px;top:387px;width:30px;height:1px;background:#d2d2d2"></div>
<div class="abs serif" style="left:417.500px;top:397px;height:19px;line-height:19px;font-size:13px;color:#555;white-space:nowrap">图层<span style="font-family:'Liberation Sans',sans-serif;font-size:13px;color:#444;letter-spacing:0">1</span></div>
<div class="abs serif" style="left:417.500px;top:445.500px;height:19px;line-height:19px;font-size:13px;color:#555;white-space:nowrap;letter-spacing:-0.500px">背景</div>
<svg id="lpi" style="left:0;top:0;opacity:0.999" width="600" height="520" viewBox="0 0 600 520">
<circle cx="572" cy="277" r="5.800" fill="#dadadc" stroke="#c3c3c3" stroke-width="1"/>
<!-- plus -->
<path d="M401.500 298.300 V308.900 M396.200 303.600 H406.800" stroke="#8a8a8a" stroke-width="2.700" stroke-linecap="round"/>
<!-- folder -->
<path d="M434.600 298.400 a1 1 0 0 1 1 -1 h4.800 l1.400 2.400 h7.900 a1 1 0 0 1 1 1 v8.400 a1 1 0 0 1 -1 1 h-14.100 a1 1 0 0 1 -1 -1 Z" fill="#fff" stroke="#8a8a8a" stroke-width="1.200" stroke-linejoin="round"/>
<path d="M434.600 299.800 v-1.400 a1 1 0 0 1 1 -1 h4.800 l1.400 2.400 Z" fill="#8a8a8a"/>
<!-- image -->
<rect x="473.600" y="298" width="16" height="11.700" fill="#fff" stroke="#8a8a8a" stroke-width="1.200"/>
<path d="M473 309.700 H490.200" stroke="#8a8a8a" stroke-width="2.200"/>
<path d="M475.300 308.200 L478.300 303.700 L480.300 306.400 L483.300 301 L487.800 308.200 Z" fill="#8a8a8a"/>
<!-- clear -->
<path d="M520.200 297.900 H526.300 a1.200 1.200 0 0 1 1.200 1.200 V309 a1.200 1.200 0 0 1 -1.200 1.200 H518.800 a1.200 1.200 0 0 1 -1.200 -1.200 V300.500 Z" fill="#fff" stroke="#8a8a8a" stroke-width="1.200" stroke-linejoin="round"/>
<rect x="517.600" y="304.600" width="9.900" height="3.700" fill="#8a8a8a"/>
<!-- menu -->
<path d="M556 299.600 H568 M556 303.700 H568 M556 307.800 H568" stroke="#8a8a8a" stroke-width="2"/>
<!-- dropdown arrow -->
<path d="M525.800 331.100 H533 L529.400 335 Z" fill="#444"/>
<!-- opacity text -->
<text x="562" y="336.400" text-anchor="middle" font-family="'Liberation Sans',sans-serif" font-size="12" fill="#111" textLength="17" lengthAdjust="spacingAndGlyphs">100</text>
<!-- eyes -->
<g id="eye1">
<path d="M390 366 C392.500 362.400 395.200 361 398 361 C400.800 361 403.500 362.400 406 366 C403.500 369.600 400.800 371 398 371 C395.200 371 392.500 369.600 390 366 Z" fill="#808080"/>
<circle cx="398" cy="366" r="3.700" fill="#fafafa"/>
<circle cx="398" cy="366" r="2.200" fill="#808080"/>
</g>
<use href="#eye1" x="-2.100" y="88.100"/>
<!-- dotted circle -->
<g fill="#fff" fill-opacity="0.9"><circle cx="474" cy="380" r="2.200"/><circle cx="481" cy="387" r="2.200"/><circle cx="474" cy="394" r="2.200"/><circle cx="467" cy="387" r="2.200"/><circle cx="469" cy="382" r="2.200"/><circle cx="479" cy="382" r="2.200"/><circle cx="469" cy="392" r="2.200"/><circle cx="479" cy="392" r="2.200"/></g><g fill="#3c4045"><rect x="473" y="379" width="2" height="2"/><rect x="480" y="386" width="2" height="2"/><rect x="473" y="393" width="2" height="2"/><rect x="466" y="386" width="2" height="2"/><rect x="468" y="381" width="2" height="2"/><rect x="478" y="381" width="2" height="2"/><rect x="468" y="391" width="2" height="2"/><rect x="478" y="391" width="2" height="2"/></g>
<!-- small circle -->
<circle cx="397.800" cy="406.900" r="5.700" fill="#e8e8e8" stroke="#d6d6d6" stroke-width="0.800"/>
<!-- lock -->
<path d="M546.500 400.300 V398.500 a3 3 0 0 1 6 0 V399.300" fill="none" stroke="#8a8a8a" stroke-width="1.300"/>
<rect x="545.300" y="400.800" width="9.200" height="7.600" fill="#fdfdfd" stroke="#8a8a8a" stroke-width="1.100"/>
<path d="M546 401.600 h2 v2 h-2 Z M550 401.600 h2 v2 h-2 Z M548 403.600 h2 v2 h-2 Z M552 403.600 h1.800 v2 h-1.800 Z M546 405.600 h2 v2 h-2 Z M550 405.600 h2 v2 h-2 Z" fill="#9a9a9a"/>
<!-- bg circle -->
<circle cx="529" cy="453.900" r="19.600" fill="#fff" stroke="#dcdcdc" stroke-width="0.900"/>
</svg>

<!-- ===== dialog ===== -->
<div class="abs" id="dlg">
<div class="abs" style="left:0;top:0;width:422px;height:30px;background:#fff"></div>
<!-- title icon -->
<svg style="left:8px;top:7px" width="16" height="14" viewBox="0 0 16 14">
<defs><linearGradient id="gIc" x1="0" y1="0" x2="0.300" y2="1"><stop offset="0" stop-color="#2f6c9c"/><stop offset="0.500" stop-color="#2f8a6c"/><stop offset="1" stop-color="#5aa55a"/></linearGradient></defs>
<rect x="0.500" y="0.500" width="14.500" height="12.500" fill="#fdfdfd" stroke="#b4b8c0" stroke-width="1"/>
<rect x="2" y="2.600" width="5.200" height="8.400" fill="url(#gIc)"/>
<rect x="8.600" y="2.600" width="2.600" height="8.400" fill="#e4e4e4"/>
<rect x="12.200" y="2.600" width="1.800" height="4" fill="#8ab0c8"/>
<rect x="12.200" y="6.600" width="1.800" height="4.400" fill="#eaeaea"/>
</svg>
<div class="abs" style="left:29px;top:5px;height:20px;line-height:20px;font-size:12px;color:#000;white-space:nowrap">编辑文本图层</div>
<svg style="left:402px;top:9px" width="12" height="12" viewBox="0 0 12 12"><path d="M0.400 0.200 L10.100 9.900 M10.100 0.200 L0.400 9.900" stroke="#111" stroke-width="1.100" fill="none"/></svg>
<!-- font combo -->
<div class="abs wbtn" style="left:18px;top:41px;width:152px;height:21px"></div>
<div class="abs" style="left:21px;top:43px;height:19px;line-height:19px;font-size:11.500px;color:#000;white-space:nowrap;letter-spacing:-0.340px">Microsoft YaHei UI</div>
<svg style="left:156px;top:48px" width="10" height="7" viewBox="0 0 10 7"><path d="M0.700 1 L5 5.300 L9.300 1" stroke="#444" stroke-width="1.100" fill="none"/></svg>
<!-- size combo -->
<div class="abs wbtn" style="left:182px;top:41px;width:47px;height:21px"></div>
<div class="abs" style="left:185.500px;top:43px;height:19px;line-height:19px;font-size:11.500px;color:#000;white-space:nowrap;letter-spacing:-0.300px">36</div>
<svg style="left:215px;top:48px" width="10" height="7" viewBox="0 0 10 7"><path d="M0.700 1 L5 5.300 L9.300 1" stroke="#444" stroke-width="1.100" fill="none"/></svg>
<!-- style buttons -->
<div class="abs wbtn sb" style="left:238px;top:42px;width:31px;height:26px;font-weight:bold">B</div>
<div class="abs wbtn sb" style="left:271px;top:42px;width:31px;height:26px;font-style:italic">I</div>
<div class="abs wbtn sb" style="left:304px;top:42px;width:31px;height:26px;text-decoration:underline">U</div>
<div class="abs wbtn sb" style="left:337px;top:42px;width:31px;height:26px;text-decoration:line-through">S</div>
<!-- colour swatch -->
<div class="abs" style="left:371px;top:41px;width:28px;height:28px;background:#000;border-top:2px solid #7a7a7a;border-left:2px solid #7a7a7a;border-right:1px solid #fff;border-bottom:1px solid #fff"></div>
<!-- text area -->
<div class="abs" style="left:17px;top:80px;width:383px;height:179px;background:#fff;border-top:1px solid #a0a0a0;border-left:1px solid #a0a0a0;border-right:1px solid #fff;border-bottom:1px solid #fff"></div>
<div class="abs" style="left:18px;top:81px;width:381px;height:177px;background:#fff;border-top:1px solid #696969;border-left:1px solid #696969;border-right:1px solid #e3e3e3;border-bottom:1px solid #e3e3e3"></div>
<!-- buttons -->
<div class="abs" style="left:241px;top:272px;width:70px;height:21px;background:#e1e1e1;border:2px solid #0078d7;text-align:center;line-height:18.500px;font-size:12px">确定</div>
<div class="abs wbtn" style="left:328px;top:272px;width:70px;height:21px;text-align:center;line-height:20.500px;font-size:12px">取消</div>
</div>

</body>
</html>
